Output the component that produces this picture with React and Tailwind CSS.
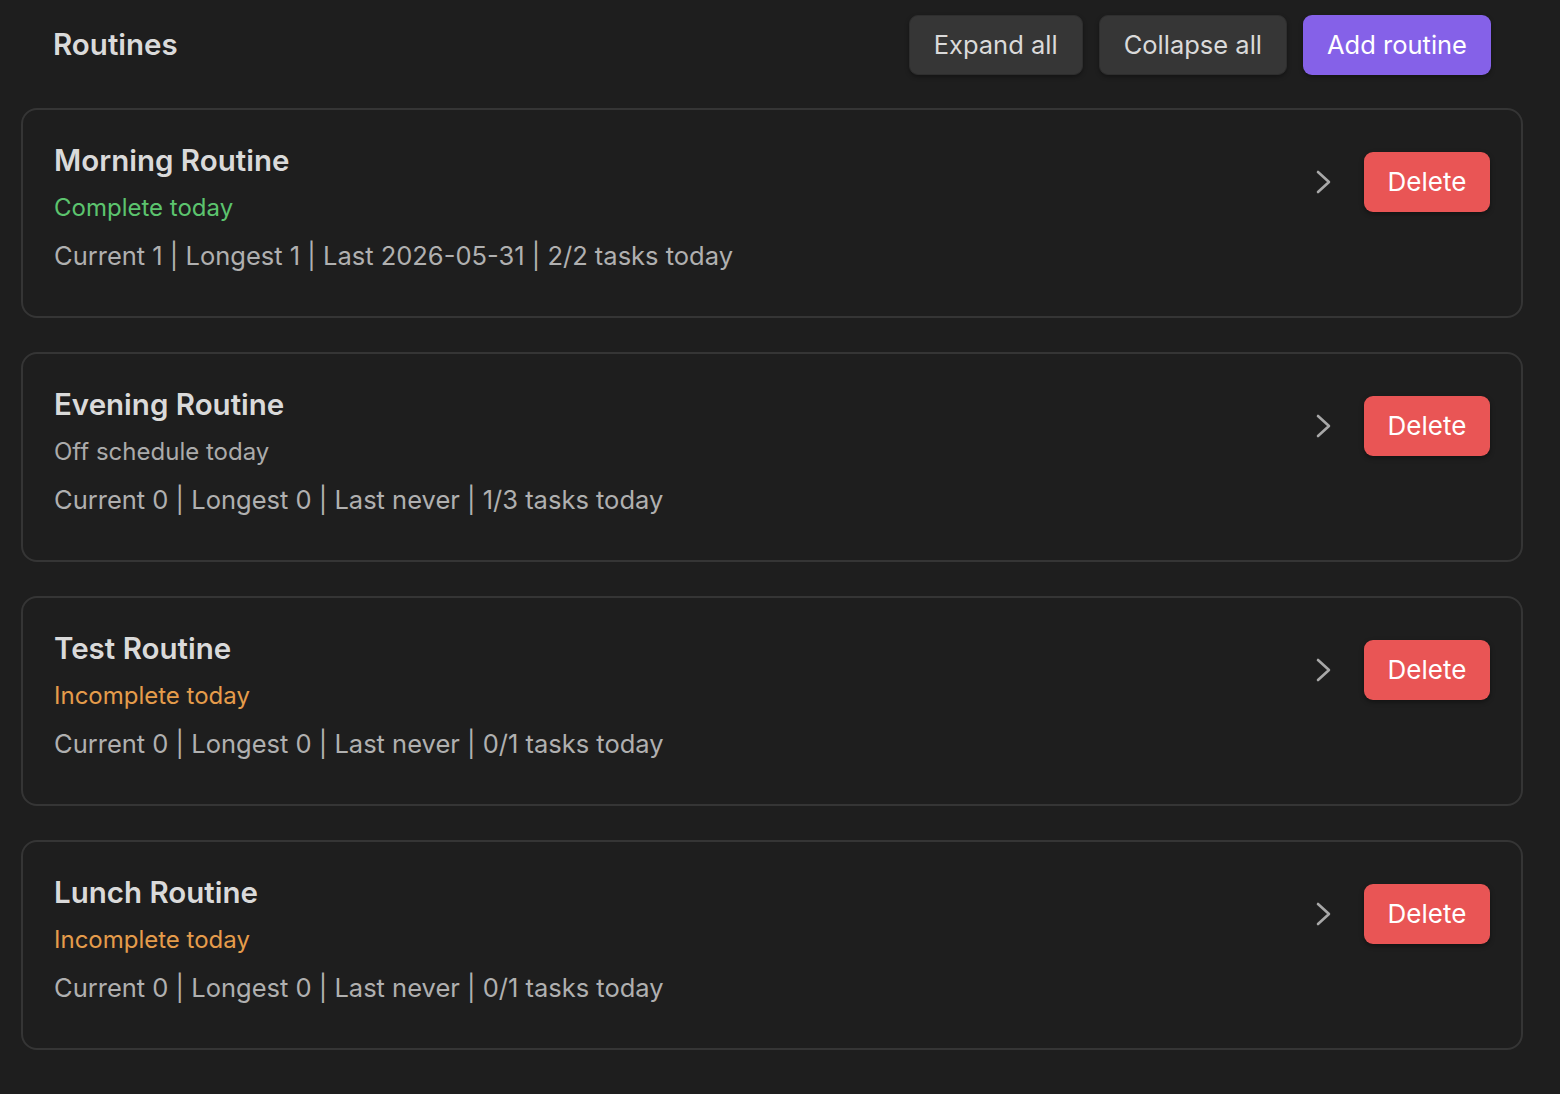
import React from "react";

const routines = [
  {
    name: "Morning Routine",
    status: "Complete today",
    tone: "text-[#5cc46e]",
    stats: "Current 1 | Longest 1 | Last 2026-05-31 | 2/2 tasks today",
  },
  {
    name: "Evening Routine",
    status: "Off schedule today",
    tone: "text-[#ababab]",
    stats: "Current 0 | Longest 0 | Last never | 1/3 tasks today",
  },
  {
    name: "Test Routine",
    status: "Incomplete today",
    tone: "text-[#e59c4b]",
    stats: "Current 0 | Longest 0 | Last never | 0/1 tasks today",
  },
  {
    name: "Lunch Routine",
    status: "Incomplete today",
    tone: "text-[#e59c4b]",
    stats: "Current 0 | Longest 0 | Last never | 0/1 tasks today",
  },
];

function Chevron() {
  return (
    <svg width="16" height="24" viewBox="0 0 16 24" fill="none" className="text-[#a8a8a8]">
      <polyline
        points="2,2 13,12 2,22"
        stroke="currentColor"
        strokeWidth="2.6"
        strokeLinecap="round"
        strokeLinejoin="round"
      />
    </svg>
  );
}

function HeaderButton({ children, primary }) {
  return (
    <button
      className={
        "h-[60px] rounded-[9px] px-6 text-[25.5px] leading-none shadow-[0_2px_4px_rgba(0,0,0,0.35)] " +
        (primary
          ? "bg-[#8561e8] text-white"
          : "bg-[#363636] text-[#dadada] border border-[#2e2e2e]")
      }
    >
      {children}
    </button>
  );
}

function RoutineCard({ r }) {
  return (
    <div className="rounded-[16px] border-2 border-[#353535] pl-[31px] pr-[31px] pt-[32px] pb-[43px] flex justify-between">
      <div className="flex flex-col">
        <div className="text-[29.5px] leading-[36px] font-semibold text-[#dadada]">{r.name}</div>
        <div className={"mt-[14px] text-[24px] leading-[32px] " + r.tone}>{r.status}</div>
        <div className="mt-[15px] text-[25.5px] leading-[34px] text-[#b0b0b0]">{r.stats}</div>
      </div>
      <div className="flex items-center gap-[32px] self-start mt-[10px]">
        <Chevron />
        <button className="h-[60px] w-[126px] rounded-[9px] bg-[#e95555] text-white text-[26px] leading-none shadow-[0_2px_5px_rgba(0,0,0,0.4)]">
          Delete
        </button>
      </div>
    </div>
  );
}

export default function App() {
  return (
    <div
      className="min-h-[1094px] bg-[#1e1e1e] pl-[21px] pr-[37px] pt-[15px] pb-[40px]"
      style={{ fontFamily: "Inter, 'Noto Sans', sans-serif" }}
    >
      <div className="flex items-center justify-between pl-[32px] pr-[32px]">
        <h1 className="text-[29.5px] font-semibold text-[#dadada] leading-none">Routines</h1>
        <div className="flex gap-[16px]">
          <HeaderButton>Expand all</HeaderButton>
          <HeaderButton>Collapse all</HeaderButton>
          <HeaderButton primary>Add routine</HeaderButton>
        </div>
      </div>
      <div className="mt-[33px] flex flex-col gap-[34px]">
        {routines.map((r) => (
          <RoutineCard key={r.name} r={r} />
        ))}
      </div>
    </div>
  );
}
